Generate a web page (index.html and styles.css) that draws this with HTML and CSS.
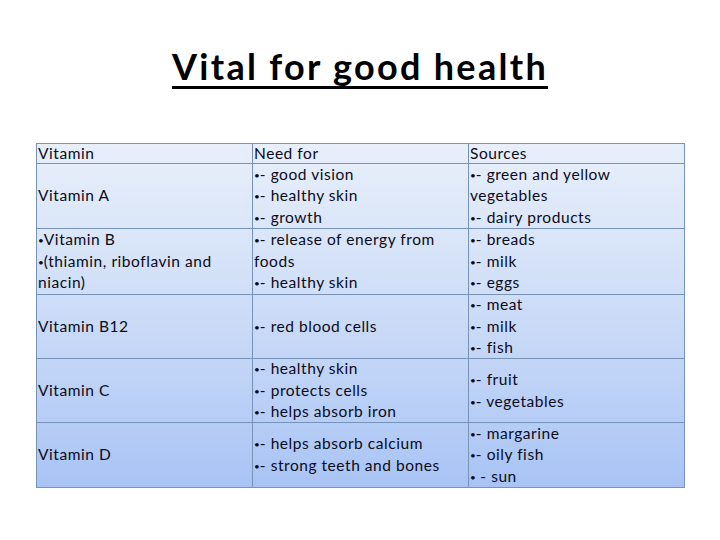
FILE: index.html
```html
<!DOCTYPE html>
<html>
<head>
<meta charset="utf-8">
<link rel="stylesheet" href="styles.css">
</head>
<body>
<h1 class="title">Vital for good health</h1>
<table class="vit">
  <colgroup><col class="col"><col class="col"><col class="col"></colgroup>
  <tr class="r-head">
    <td><div class="c">Vitamin</div></td>
    <td><div class="c">Need for</div></td>
    <td><div class="c">Sources</div></td>
  </tr>
  <tr class="r-a">
    <td><div class="c">Vitamin A</div></td>
    <td><div class="c"><span><b class="d">•</b>- good vision</span><span><b class="d">•</b>- healthy skin</span><span><b class="d">•</b>- growth</span></div></td>
    <td><div class="c"><span><b class="d">•</b>- green and yellow</span><span>vegetables</span><span><b class="d">•</b>- dairy products</span></div></td>
  </tr>
  <tr class="r-b">
    <td><div class="c"><span><b class="d">•</b>Vitamin B</span><span><b class="d">•</b>(thiamin, riboflavin and</span><span>niacin)</span></div></td>
    <td><div class="c"><span><b class="d">•</b>- release of energy from</span><span>foods</span><span><b class="d">•</b>- healthy skin</span></div></td>
    <td><div class="c"><span><b class="d">•</b>- breads</span><span><b class="d">•</b>- milk</span><span><b class="d">•</b>- eggs</span></div></td>
  </tr>
  <tr class="r-b12">
    <td><div class="c">Vitamin B12</div></td>
    <td><div class="c"><span><b class="d">•</b>- red blood cells</span></div></td>
    <td><div class="c"><span><b class="d">•</b>- meat</span><span><b class="d">•</b>- milk</span><span><b class="d">•</b>- fish</span></div></td>
  </tr>
  <tr class="r-c">
    <td><div class="c">Vitamin C</div></td>
    <td><div class="c"><span><b class="d">•</b>- healthy skin</span><span><b class="d">•</b>- protects cells</span><span><b class="d">•</b>- helps absorb iron</span></div></td>
    <td><div class="c"><span><b class="d">•</b>- fruit</span><span><b class="d">•</b>- vegetables</span></div></td>
  </tr>
  <tr class="r-d">
    <td><div class="c">Vitamin D</div></td>
    <td><div class="c"><span><b class="d">•</b>- helps absorb calcium</span><span><b class="d">•</b>- strong teeth and bones</span></div></td>
    <td><div class="c"><span><b class="d">•</b>- margarine</span><span><b class="d">•</b>- oily fish</span><span><b class="d">•</b> - sun</span></div></td>
  </tr>
</table>
</body>
</html>
```

FILE: styles.css
```css
html, body {
  margin: 0;
  padding: 0;
  background: #ffffff;
}
body {
  width: 720px;
  height: 540px;
  font-family: Lato, "Open Sans", sans-serif;
  color: #0b0b18;
}
.title {
  margin: 0;
  padding-top: 44px;
  height: 143px;
  box-sizing: border-box;
  text-align: center;
  font-size: 36px;
  font-weight: 700;
  line-height: 44px;
  letter-spacing: 2.3px;
  color: #000;
  text-decoration: underline;
  text-decoration-thickness: 3px;
  text-underline-offset: 6px;
}
.vit {
  margin-left: 36px;
  width: 649px;
  border-collapse: collapse;
  table-layout: fixed;
  background: linear-gradient(to bottom, #e8effb 0%, #d8e4f8 30%, #c5d7f7 60%, #a8c3f4 100%);
  font-size: 15.5px;
  letter-spacing: 0.55px;
}
.col { width: 216px; }
.vit td {
  border: 1px solid #7893b8;
  padding: 0 0 0 1px;
  vertical-align: top;
  white-space: nowrap;
}
.c {
  display: flex;
  flex-direction: column;
  justify-content: center;
  line-height: 21.6px;
  overflow: visible;
}
.c > span {
  display: block;
  height: 21.6px;
  flex: none;
}
.d {
  font-weight: 400;
  font-size: 10px;
  line-height: 0;
  letter-spacing: 0;
  vertical-align: 1px;
}
.r-head .c { height: 19px; }
.r-a .c { height: 64px; }
.r-b .c { height: 65px; }
.r-b12 .c { height: 63px; }
.r-c .c { height: 63px; }
.r-d .c { height: 64px; }
```
